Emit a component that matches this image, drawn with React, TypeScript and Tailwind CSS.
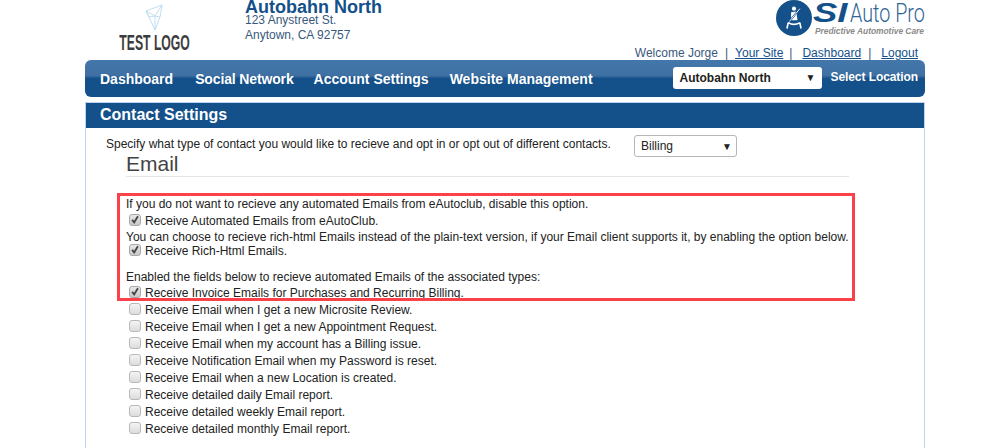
const arial = { fontFamily: '"Liberation Sans", Arial, sans-serif' };

const otherOptions = [
  'Receive Email when I get a new Microsite Review.',
  'Receive Email when I get a new Appointment Request.',
  'Receive Email when my account has a Billing issue.',
  'Receive Notification Email when my Password is reset.',
  'Receive Email when a new Location is created.',
  'Receive detailed daily Email report.',
  'Receive detailed weekly Email report.',
  'Receive detailed monthly Email report.',
];

function Check({ label, checked }: { label: string; checked?: boolean }) {
  return (
    <div className="flex h-[17px] items-center pl-[3px] text-[12px] leading-[17px]">
      <span
        className={
          checked
            ? 'mb-[4px] flex h-[12px] w-[12px] shrink-0 items-center justify-center rounded-[3px] border border-[#a8a8a8] bg-[linear-gradient(#e8e8e8,#c8c8c8)]'
            : 'mb-[4px] flex h-[12px] w-[12px] shrink-0 items-center justify-center rounded-[3px] border border-[#b8b8b8] bg-[linear-gradient(#f4f4f4,#dcdcdc)]'
        }
      >
        {checked && (
          <svg viewBox="0 0 12 12" className="h-[11px] w-[11px]">
            <path d="M2.5 6.5 L5 9.5 L9.5 2" fill="none" stroke="#444" strokeWidth="2.2" />
          </svg>
        )}
      </span>
      <span className="ml-[4px]">{label}</span>
    </div>
  );
}

function TestLogo() {
  return (
    <div className="flex w-[90px] flex-col items-center">
      <svg viewBox="0 0 20 28" className="h-[28px] w-[20px]">
        <path
          d="M1 7 L17 1 L15 13 L10 26 L4 13 Z M1 7 L10 12 L17 1 M10 12 L15 13 M10 12 L10 26 M4 13 L10 12 M1 7 L4 13"
          fill="none"
          stroke="#b0d8ee"
          strokeWidth="0.8"
        />
      </svg>
      <div className="mt-[1px] scale-x-[0.555] text-[22px] leading-[20px] font-bold whitespace-nowrap text-[#3c3c3c]">TEST LOGO</div>
    </div>
  );
}

function SiLogo() {
  return (
    <div className="flex items-start">
      <div className="flex h-[36px] w-[36px] items-center justify-center rounded-full bg-[#14508a]">
        <svg viewBox="0 0 24 24" className="h-[28px] w-[28px]">
          <circle cx="12" cy="4" r="1.8" fill="#fff" />
          <path d="M9.5 7 L14 6.5 L15 14 L9.5 14 Z" fill="#fff" />
          <path d="M17 4 L8 15" fill="none" stroke="#14508a" strokeWidth="1.6" />
          <path d="M17 4 L8 15" fill="none" stroke="#fff" strokeWidth="0.8" />
          <path d="M7 16 Q12 19 17 16 M7 16 L6 21 M17 16 L18 21" fill="none" stroke="#fff" strokeWidth="1.4" />
        </svg>
      </div>
      <div className="ml-[1px] flex w-[111px] flex-col">
        <div className="flex h-[26px] items-baseline">
          <span className="w-[37px] origin-left scale-x-[1.35] text-[27px] leading-[26px] font-bold text-[#14508a] italic">SI</span>
          <span className="w-[74px] origin-left scale-x-[0.76] font-['Roboto'] text-[26px] leading-[26px] font-light whitespace-nowrap text-[#2f6496]">Auto Pro</span>
        </div>
        <div className="text-right text-[8.4px] leading-[10px] font-bold whitespace-nowrap text-[#8a8a8a] italic">Predictive Automotive Care</div>
      </div>
    </div>
  );
}

export default function App() {
  return (
    <div className="h-[448px] overflow-hidden bg-white text-[12px] text-[#222]" style={arial}>
      <div className="ml-[85px] w-[840px]">
        <header className="flex h-[60px] justify-between">
          <div className="flex">
            <div className="ml-[25px] pt-[4px]">
              <TestLogo />
            </div>
            <div className="ml-[45px] text-[#38587c]">
              <div className="mt-[1px] text-[18px] leading-[13px] font-bold text-[#14508a]">Autobahn North</div>
              <div className="text-[12px] leading-[12px]">123 Anystreet St.</div>
              <div className="mt-[2px] text-[12px] leading-[14px]">Anytown, CA 92757</div>
            </div>
          </div>
          <div className="flex flex-col items-end pr-[1px]">
            <SiLogo />
            <div className="mt-[10px] pr-[6px] text-[12px] leading-[14px] text-[#38587c]">
              Welcome Jorge<span className="mx-[7px]">|</span>
              <span className="text-[#14508a] underline">Your Site</span>
              <span className="mr-[10px] ml-[6px]">|</span>
              <span className="text-[#14508a] underline">Dashboard</span>
              <span className="mr-[10px] ml-[7px]">|</span>
              <span className="text-[#14508a] underline">Logout</span>
            </div>
          </div>
        </header>

        <nav className="flex h-[37px] items-center justify-between rounded-[6px] bg-[linear-gradient(#4377ab_0%,#3f70a3_42%,#14508a_50%,#14508a_100%)] pr-[7px] pl-[15px] font-bold text-white">
          <div className="flex gap-[20px] pt-[1px] text-[14px]">
            <span className="mr-[2px]">Dashboard</span>
            <span className="tracking-[-0.14px]">Social Network</span>
            <span>Account Settings</span>
            <span className="ml-[1px]">Website Management</span>
          </div>
          <div className="flex items-center">
            <div className="-mt-[2px] flex h-[22px] w-[149px] items-center justify-between rounded-[3px] bg-white pr-[6px] pl-[7px] text-[12px] text-[#222]">
              <span>Autobahn North</span>
              <span className="text-[10px]">▼</span>
            </div>
            <span className="-mt-[3px] ml-[9px] text-[12px] tracking-[-0.08px]">Select Location</span>
          </div>
        </nav>

        <main className="mt-[5px] h-[346px] border-x border-t border-[#bcd4f0]">
          <h2 className="h-[25px] bg-[#14508a] pl-[14px] text-[16px] leading-[23px] font-bold text-white">Contact Settings</h2>
          <div className="relative pt-[8px] pl-[20px]">
            <div className="flex h-[20px] items-center">
              <span className="mb-[4px] w-[528px]">Specify what type of contact you would like to recieve and opt in or opt out of different contacts.</span>
              <div className="flex h-[22px] w-[103px] shrink-0 items-center justify-between rounded-[3px] border border-[#b9b5b5] bg-white pr-[4px] pl-[6px] text-[12px]">
                <span>Billing</span>
                <span className="text-[10px]">▼</span>
              </div>
            </div>
            <div className="ml-[20px] w-[723px]">
              <h3 className="h-[21px] border-b border-[#e5e5e5] text-[21px] leading-[16px] text-[#444]">Email</h3>
              <div className="pt-[20px]">
                <p className="h-[16px] leading-[14px]">If you do not want to recieve any automated Emails from eAutoclub, disable this option.</p>
                <Check label="Receive Automated Emails from eAutoClub." checked />
                <p className="h-[13px] leading-[14px]">You can choose to recieve rich-html Emails instead of the plain-text version, if your Email client supports it, by enabling the option below.</p>
                <Check label="Receive Rich-Html Emails." checked />
                <p className="mt-[10px] h-[15px] leading-[14px]">Enabled the fields below to recieve automated Emails of the associated types:</p>
                <Check label="Receive Invoice Emails for Purchases and Recurring Billing." checked />
                {otherOptions.map((o) => (
                  <Check key={o} label={o} />
                ))}
              </div>
              <div className="absolute top-[65px] left-[31px] h-[108px] w-[738px] border-[3px] border-[#fb4149]" />
            </div>
          </div>
        </main>
      </div>
    </div>
  );
}
